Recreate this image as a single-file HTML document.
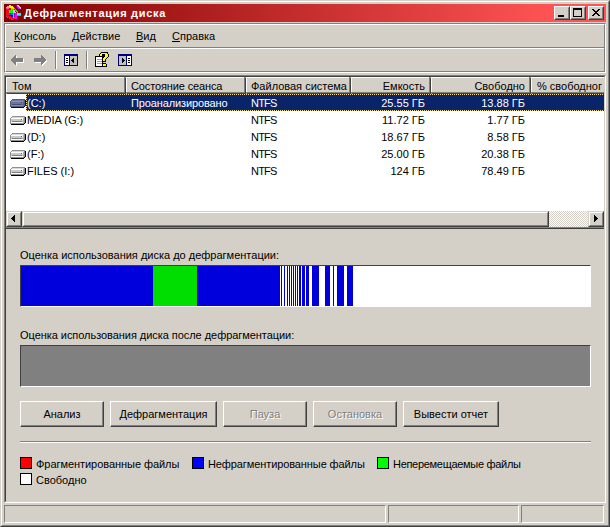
<!DOCTYPE html>
<html><head><meta charset="utf-8">
<style>
*{margin:0;padding:0;box-sizing:border-box}
html,body{width:610px;height:527px;overflow:hidden;background:#D4D0C8}
body{position:relative;font-family:"Liberation Sans",sans-serif;font-size:11px;color:#000}
.a{position:absolute;display:block}
.t{position:absolute;white-space:nowrap;line-height:13px}
u{text-decoration:underline}
</style></head><body>
<div class="a" style="left:0px;top:0px;width:610px;height:527px;border-top:1px solid #D4D0C8;border-left:1px solid #D4D0C8;border-right:1px solid #404040;border-bottom:1px solid #404040;"></div><div class="a" style="left:1px;top:1px;width:608px;height:525px;border-top:1px solid #FFFFFF;border-left:1px solid #FFFFFF;border-right:1px solid #808080;border-bottom:1px solid #808080"></div>
<div class="a" style="left:4px;top:4px;width:602px;height:18px;background:linear-gradient(to right,#800000 0px,#FF5454 550px,#FF5454 602px)"></div>
<svg class="a" style="left:5px;top:4px" width="18" height="16" shape-rendering="crispEdges"><rect x="4" y="1" width="2" height="1" fill="#FFFF00"/><rect x="11" y="1" width="1" height="1" fill="#9000D0"/><rect x="12" y="1" width="2" height="1" fill="#FFA8FF"/><rect x="2" y="2" width="2" height="1" fill="#FF8C8C"/><rect x="4" y="2" width="4" height="1" fill="#FFFF00"/><rect x="11" y="2" width="1" height="1" fill="#9000D0"/><rect x="12" y="2" width="1" height="1" fill="#FF00FF"/><rect x="13" y="2" width="2" height="1" fill="#FFA8FF"/><rect x="1" y="3" width="3" height="1" fill="#FF8C8C"/><rect x="4" y="3" width="4" height="1" fill="#FFFF00"/><rect x="8" y="3" width="1" height="1" fill="#FFD000"/><rect x="12" y="3" width="2" height="1" fill="#FF00FF"/><rect x="14" y="3" width="2" height="1" fill="#FFA8FF"/><rect x="1" y="4" width="3" height="1" fill="#FF5A6E"/><rect x="4" y="4" width="2" height="1" fill="#FF0020"/><rect x="6" y="4" width="3" height="1" fill="#FFD000"/><rect x="9" y="4" width="1" height="1" fill="#FF9000"/><rect x="13" y="4" width="2" height="1" fill="#FF00FF"/><rect x="15" y="4" width="1" height="1" fill="#FFA8FF"/><rect x="1" y="5" width="5" height="1" fill="#FF0020"/><rect x="6" y="5" width="3" height="1" fill="#FF9000"/><rect x="9" y="5" width="1" height="1" fill="#006000"/><rect x="10" y="5" width="1" height="1" fill="#00FF00"/><rect x="14" y="5" width="1" height="1" fill="#200020"/><rect x="1" y="6" width="3" height="1" fill="#FF0020"/><rect x="4" y="6" width="4" height="1" fill="#00FF00"/><rect x="8" y="6" width="2" height="1" fill="#FFA8FF"/><rect x="10" y="6" width="2" height="1" fill="#00FF00"/><rect x="1" y="7" width="3" height="1" fill="#FF0020"/><rect x="4" y="7" width="4" height="1" fill="#00FF00"/><rect x="8" y="7" width="2" height="1" fill="#FFA8FF"/><rect x="10" y="7" width="1" height="1" fill="#006000"/><rect x="11" y="7" width="2" height="1" fill="#00FF00"/><rect x="1" y="8" width="3" height="1" fill="#FF0020"/><rect x="4" y="8" width="4" height="1" fill="#00FF00"/><rect x="8" y="8" width="3" height="1" fill="#FFA8FF"/><rect x="12" y="8" width="1" height="1" fill="#00FF00"/><rect x="1" y="9" width="3" height="1" fill="#FF0020"/><rect x="4" y="9" width="4" height="1" fill="#0060FF"/><rect x="8" y="9" width="1" height="1" fill="#00C8E8"/><rect x="9" y="9" width="1" height="1" fill="#9000D0"/><rect x="10" y="9" width="2" height="1" fill="#FF00FF"/><rect x="12" y="9" width="4" height="1" fill="#00FFFF"/><rect x="16" y="9" width="1" height="1" fill="#0010F0"/><rect x="1" y="10" width="3" height="1" fill="#FF0020"/><rect x="4" y="10" width="4" height="1" fill="#0060FF"/><rect x="8" y="10" width="1" height="1" fill="#00FFFF"/><rect x="9" y="10" width="1" height="1" fill="#9000D0"/><rect x="10" y="10" width="2" height="1" fill="#FF00FF"/><rect x="12" y="10" width="4" height="1" fill="#00FFFF"/><rect x="1" y="11" width="3" height="1" fill="#FF0020"/><rect x="4" y="11" width="4" height="1" fill="#0010F0"/><rect x="8" y="11" width="1" height="1" fill="#00FFFF"/><rect x="9" y="11" width="1" height="1" fill="#9000D0"/><rect x="10" y="11" width="2" height="1" fill="#FF00FF"/><rect x="12" y="11" width="4" height="1" fill="#00C8E8"/><rect x="1" y="12" width="1" height="1" fill="#C04080"/><rect x="2" y="12" width="4" height="1" fill="#FF0020"/><rect x="6" y="12" width="2" height="1" fill="#0010F0"/><rect x="8" y="12" width="1" height="1" fill="#00FFFF"/><rect x="9" y="12" width="1" height="1" fill="#9000D0"/><rect x="10" y="12" width="2" height="1" fill="#FF00FF"/><rect x="2" y="13" width="1" height="1" fill="#C04080"/><rect x="3" y="13" width="5" height="1" fill="#FF0020"/><rect x="8" y="13" width="1" height="1" fill="#00FFFF"/><rect x="9" y="13" width="3" height="1" fill="#FF00FF"/><rect x="4" y="14" width="1" height="1" fill="#C04080"/><rect x="5" y="14" width="5" height="1" fill="#FF0020"/><rect x="10" y="14" width="2" height="1" fill="#FF00FF"/><rect x="6" y="15" width="1" height="1" fill="#C04080"/><rect x="7" y="15" width="2" height="1" fill="#FF0020"/><rect x="9" y="15" width="1" height="1" fill="#200020"/></svg>
<div class="t" style="left:24px;top:7px;color:#fff;font-weight:bold;font-size:11px;line-height:13px;letter-spacing:0.7px">Дефрагментация диска</div>
<div class="a" style="left:554px;top:6px;width:16px;height:14px;border-top:1px solid #FFFFFF;border-left:1px solid #FFFFFF;border-right:1px solid #404040;border-bottom:1px solid #404040;background:#D4D0C8"></div><div class="a" style="left:555px;top:7px;width:14px;height:12px;border-top:1px solid #D4D0C8;border-left:1px solid #D4D0C8;border-right:1px solid #808080;border-bottom:1px solid #808080"></div>
<div class="a" style="left:570px;top:6px;width:16px;height:14px;border-top:1px solid #FFFFFF;border-left:1px solid #FFFFFF;border-right:1px solid #404040;border-bottom:1px solid #404040;background:#D4D0C8"></div><div class="a" style="left:571px;top:7px;width:14px;height:12px;border-top:1px solid #D4D0C8;border-left:1px solid #D4D0C8;border-right:1px solid #808080;border-bottom:1px solid #808080"></div>
<div class="a" style="left:588px;top:6px;width:16px;height:14px;border-top:1px solid #FFFFFF;border-left:1px solid #FFFFFF;border-right:1px solid #404040;border-bottom:1px solid #404040;background:#D4D0C8"></div><div class="a" style="left:589px;top:7px;width:14px;height:12px;border-top:1px solid #D4D0C8;border-left:1px solid #D4D0C8;border-right:1px solid #808080;border-bottom:1px solid #808080"></div>
<div class="a" style="left:558px;top:15px;width:6px;height:2px;background:#000"></div>
<div class="a" style="left:573px;top:8px;width:9px;height:9px;border:1px solid #000;border-top:2px solid #000"></div>
<svg class="a" style="left:592px;top:9px" width="8" height="7" shape-rendering="crispEdges"><rect x="0" y="0" width="2" height="1" fill="#000"/><rect x="6" y="0" width="2" height="1" fill="#000"/><rect x="1" y="1" width="2" height="1" fill="#000"/><rect x="5" y="1" width="2" height="1" fill="#000"/><rect x="2" y="2" width="4" height="1" fill="#000"/><rect x="3" y="3" width="2" height="1" fill="#000"/><rect x="2" y="4" width="4" height="1" fill="#000"/><rect x="1" y="5" width="2" height="1" fill="#000"/><rect x="5" y="5" width="2" height="1" fill="#000"/><rect x="0" y="6" width="2" height="1" fill="#000"/><rect x="6" y="6" width="2" height="1" fill="#000"/></svg>
<div class="a" style="left:4px;top:23px;width:602px;height:50px;border-top:1px solid #808080;border-left:1px solid #808080;border-right:1px solid #FFFFFF;border-bottom:1px solid #FFFFFF"></div>
<div class="a" style="left:5px;top:24px;width:600px;height:48px;border-top:1px solid #FFFFFF;border-left:1px solid #FFFFFF;border-right:1px solid #808080;border-bottom:1px solid #808080"></div>
<div class="a" style="left:6px;top:47px;width:598px;height:1px;background:#808080"></div>
<div class="a" style="left:6px;top:48px;width:598px;height:1px;background:#FFFFFF"></div>
<div class="t" style="left:14px;top:30px;"><u>К</u>онсоль</div>
<div class="t" style="left:72px;top:30px;"><u>Д</u>ействие</div>
<div class="t" style="left:136px;top:30px;"><u>В</u>ид</div>
<div class="t" style="left:172px;top:30px;"><u>С</u>правка</div>
<svg class="a" style="left:11px;top:55px" width="13" height="11" shape-rendering="crispEdges"><rect x="4" y="0" width="1" height="1" fill="#808080"/><rect x="3" y="1" width="2" height="1" fill="#808080"/><rect x="5" y="1" width="1" height="1" fill="#FFFFFF"/><rect x="2" y="2" width="3" height="1" fill="#808080"/><rect x="5" y="2" width="1" height="1" fill="#FFFFFF"/><rect x="1" y="3" width="11" height="1" fill="#808080"/><rect x="0" y="4" width="12" height="1" fill="#808080"/><rect x="12" y="4" width="1" height="1" fill="#FFFFFF"/><rect x="0" y="5" width="12" height="1" fill="#808080"/><rect x="12" y="5" width="1" height="1" fill="#FFFFFF"/><rect x="1" y="6" width="11" height="1" fill="#808080"/><rect x="12" y="6" width="1" height="1" fill="#FFFFFF"/><rect x="2" y="7" width="3" height="1" fill="#808080"/><rect x="5" y="7" width="8" height="1" fill="#FFFFFF"/><rect x="3" y="8" width="2" height="1" fill="#808080"/><rect x="5" y="8" width="1" height="1" fill="#FFFFFF"/><rect x="4" y="9" width="1" height="1" fill="#808080"/><rect x="5" y="9" width="1" height="1" fill="#FFFFFF"/><rect x="5" y="10" width="1" height="1" fill="#FFFFFF"/></svg>
<svg class="a" style="left:34px;top:55px" width="13" height="11" shape-rendering="crispEdges"><rect x="7" y="0" width="1" height="1" fill="#808080"/><rect x="7" y="1" width="2" height="1" fill="#808080"/><rect x="7" y="2" width="3" height="1" fill="#808080"/><rect x="0" y="3" width="11" height="1" fill="#808080"/><rect x="0" y="4" width="12" height="1" fill="#808080"/><rect x="0" y="5" width="12" height="1" fill="#808080"/><rect x="12" y="5" width="1" height="1" fill="#FFFFFF"/><rect x="0" y="6" width="11" height="1" fill="#808080"/><rect x="11" y="6" width="2" height="1" fill="#FFFFFF"/><rect x="1" y="7" width="6" height="1" fill="#FFFFFF"/><rect x="7" y="7" width="3" height="1" fill="#808080"/><rect x="10" y="7" width="2" height="1" fill="#FFFFFF"/><rect x="7" y="8" width="2" height="1" fill="#808080"/><rect x="9" y="8" width="2" height="1" fill="#FFFFFF"/><rect x="7" y="9" width="1" height="1" fill="#808080"/><rect x="8" y="9" width="2" height="1" fill="#FFFFFF"/><rect x="8" y="10" width="1" height="1" fill="#FFFFFF"/></svg>
<div class="a" style="left:55px;top:51px;width:1px;height:18px;background:#808080"></div>
<div class="a" style="left:56px;top:51px;width:1px;height:18px;background:#FFFFFF"></div>
<svg class="a" style="left:64px;top:54px" width="14" height="12" shape-rendering="crispEdges"><rect x="0" y="0" width="14" height="1" fill="#000080"/><rect x="0" y="1" width="14" height="1" fill="#000080"/><rect x="0" y="2" width="1" height="1" fill="#000080"/><rect x="1" y="2" width="4" height="1" fill="#FFFFFF"/><rect x="5" y="2" width="1" height="1" fill="#000080"/><rect x="6" y="2" width="7" height="1" fill="#C0C0C0"/><rect x="13" y="2" width="1" height="1" fill="#000080"/><rect x="0" y="3" width="1" height="1" fill="#000080"/><rect x="1" y="3" width="4" height="1" fill="#FFFFFF"/><rect x="5" y="3" width="1" height="1" fill="#000080"/><rect x="6" y="3" width="7" height="1" fill="#C0C0C0"/><rect x="13" y="3" width="1" height="1" fill="#000080"/><rect x="0" y="4" width="1" height="1" fill="#000080"/><rect x="1" y="4" width="1" height="1" fill="#FFFFFF"/><rect x="2" y="4" width="2" height="1" fill="#000"/><rect x="4" y="4" width="1" height="1" fill="#FFFFFF"/><rect x="5" y="4" width="1" height="1" fill="#000080"/><rect x="6" y="4" width="3" height="1" fill="#C0C0C0"/><rect x="9" y="4" width="1" height="1" fill="#000"/><rect x="10" y="4" width="3" height="1" fill="#C0C0C0"/><rect x="13" y="4" width="1" height="1" fill="#000080"/><rect x="0" y="5" width="1" height="1" fill="#000080"/><rect x="1" y="5" width="4" height="1" fill="#FFFFFF"/><rect x="5" y="5" width="1" height="1" fill="#000080"/><rect x="6" y="5" width="2" height="1" fill="#C0C0C0"/><rect x="8" y="5" width="2" height="1" fill="#000"/><rect x="10" y="5" width="3" height="1" fill="#C0C0C0"/><rect x="13" y="5" width="1" height="1" fill="#000080"/><rect x="0" y="6" width="1" height="1" fill="#000080"/><rect x="1" y="6" width="1" height="1" fill="#FFFFFF"/><rect x="2" y="6" width="2" height="1" fill="#000"/><rect x="4" y="6" width="1" height="1" fill="#FFFFFF"/><rect x="5" y="6" width="1" height="1" fill="#000080"/><rect x="6" y="6" width="1" height="1" fill="#C0C0C0"/><rect x="7" y="6" width="3" height="1" fill="#000"/><rect x="10" y="6" width="3" height="1" fill="#C0C0C0"/><rect x="13" y="6" width="1" height="1" fill="#000080"/><rect x="0" y="7" width="1" height="1" fill="#000080"/><rect x="1" y="7" width="4" height="1" fill="#FFFFFF"/><rect x="5" y="7" width="1" height="1" fill="#000080"/><rect x="6" y="7" width="2" height="1" fill="#C0C0C0"/><rect x="8" y="7" width="2" height="1" fill="#000"/><rect x="10" y="7" width="3" height="1" fill="#C0C0C0"/><rect x="13" y="7" width="1" height="1" fill="#000080"/><rect x="0" y="8" width="1" height="1" fill="#000080"/><rect x="1" y="8" width="1" height="1" fill="#FFFFFF"/><rect x="2" y="8" width="2" height="1" fill="#000"/><rect x="4" y="8" width="1" height="1" fill="#FFFFFF"/><rect x="5" y="8" width="1" height="1" fill="#000080"/><rect x="6" y="8" width="3" height="1" fill="#C0C0C0"/><rect x="9" y="8" width="1" height="1" fill="#000"/><rect x="10" y="8" width="3" height="1" fill="#C0C0C0"/><rect x="13" y="8" width="1" height="1" fill="#000080"/><rect x="0" y="9" width="1" height="1" fill="#000080"/><rect x="1" y="9" width="4" height="1" fill="#FFFFFF"/><rect x="5" y="9" width="1" height="1" fill="#000080"/><rect x="6" y="9" width="7" height="1" fill="#C0C0C0"/><rect x="13" y="9" width="1" height="1" fill="#000080"/><rect x="0" y="10" width="1" height="1" fill="#000080"/><rect x="1" y="10" width="4" height="1" fill="#FFFFFF"/><rect x="5" y="10" width="1" height="1" fill="#000080"/><rect x="6" y="10" width="7" height="1" fill="#C0C0C0"/><rect x="13" y="10" width="1" height="1" fill="#000080"/><rect x="0" y="11" width="14" height="1" fill="#000080"/></svg>
<div class="a" style="left:86px;top:51px;width:1px;height:18px;background:#808080"></div>
<div class="a" style="left:87px;top:51px;width:1px;height:18px;background:#FFFFFF"></div>
<svg class="a" style="left:95px;top:52px" width="14" height="15" shape-rendering="crispEdges"><rect x="6" y="0" width="7" height="1" fill="#000"/><rect x="5" y="1" width="1" height="1" fill="#000"/><rect x="6" y="1" width="6" height="1" fill="#FFFF00"/><rect x="12" y="1" width="1" height="1" fill="#000"/><rect x="4" y="2" width="1" height="1" fill="#000"/><rect x="5" y="2" width="2" height="1" fill="#FFFF00"/><rect x="7" y="2" width="3" height="1" fill="#000"/><rect x="10" y="2" width="3" height="1" fill="#FFFF00"/><rect x="13" y="2" width="1" height="1" fill="#000"/><rect x="4" y="3" width="1" height="1" fill="#000"/><rect x="5" y="3" width="2" height="1" fill="#FFFF00"/><rect x="7" y="3" width="3" height="1" fill="#000"/><rect x="10" y="3" width="3" height="1" fill="#FFFF00"/><rect x="13" y="3" width="1" height="1" fill="#000"/><rect x="0" y="4" width="10" height="1" fill="#000"/><rect x="10" y="4" width="3" height="1" fill="#FFFF00"/><rect x="13" y="4" width="1" height="1" fill="#000"/><rect x="0" y="5" width="1" height="1" fill="#000"/><rect x="1" y="5" width="6" height="1" fill="#FFFFFF"/><rect x="7" y="5" width="2" height="1" fill="#000"/><rect x="9" y="5" width="3" height="1" fill="#FFFF00"/><rect x="12" y="5" width="1" height="1" fill="#000"/><rect x="0" y="6" width="1" height="1" fill="#000"/><rect x="1" y="6" width="6" height="1" fill="#FFFFFF"/><rect x="7" y="6" width="1" height="1" fill="#000"/><rect x="8" y="6" width="3" height="1" fill="#FFFF00"/><rect x="11" y="6" width="1" height="1" fill="#000"/><rect x="0" y="7" width="1" height="1" fill="#000"/><rect x="1" y="7" width="1" height="1" fill="#FFFFFF"/><rect x="2" y="7" width="5" height="1" fill="#A0A0A0"/><rect x="7" y="7" width="1" height="1" fill="#000"/><rect x="8" y="7" width="2" height="1" fill="#FFFF00"/><rect x="10" y="7" width="1" height="1" fill="#000"/><rect x="0" y="8" width="1" height="1" fill="#000"/><rect x="1" y="8" width="6" height="1" fill="#FFFFFF"/><rect x="7" y="8" width="1" height="1" fill="#000"/><rect x="8" y="8" width="2" height="1" fill="#FFFF00"/><rect x="10" y="8" width="1" height="1" fill="#000"/><rect x="0" y="9" width="1" height="1" fill="#000"/><rect x="1" y="9" width="1" height="1" fill="#FFFFFF"/><rect x="2" y="9" width="5" height="1" fill="#A0A0A0"/><rect x="7" y="9" width="4" height="1" fill="#000"/><rect x="0" y="10" width="1" height="1" fill="#000"/><rect x="1" y="10" width="6" height="1" fill="#FFFFFF"/><rect x="7" y="10" width="1" height="1" fill="#000"/><rect x="0" y="11" width="1" height="1" fill="#000"/><rect x="1" y="11" width="1" height="1" fill="#FFFFFF"/><rect x="2" y="11" width="5" height="1" fill="#A0A0A0"/><rect x="7" y="11" width="4" height="1" fill="#000"/><rect x="0" y="12" width="1" height="1" fill="#000"/><rect x="1" y="12" width="6" height="1" fill="#FFFFFF"/><rect x="7" y="12" width="1" height="1" fill="#000"/><rect x="8" y="12" width="3" height="1" fill="#FFFF00"/><rect x="11" y="12" width="1" height="1" fill="#000"/><rect x="0" y="13" width="1" height="1" fill="#000"/><rect x="1" y="13" width="6" height="1" fill="#FFFFFF"/><rect x="7" y="13" width="1" height="1" fill="#000"/><rect x="8" y="13" width="3" height="1" fill="#FFFF00"/><rect x="11" y="13" width="1" height="1" fill="#000"/><rect x="0" y="14" width="12" height="1" fill="#000"/></svg>
<svg class="a" style="left:118px;top:54px" width="14" height="12" shape-rendering="crispEdges"><rect x="0" y="0" width="14" height="1" fill="#000080"/><rect x="0" y="1" width="14" height="1" fill="#000080"/><rect x="0" y="2" width="1" height="1" fill="#000080"/><rect x="1" y="2" width="7" height="1" fill="#C0C0C0"/><rect x="8" y="2" width="1" height="1" fill="#000080"/><rect x="9" y="2" width="4" height="1" fill="#FFFFFF"/><rect x="13" y="2" width="1" height="1" fill="#000080"/><rect x="0" y="3" width="1" height="1" fill="#000080"/><rect x="1" y="3" width="7" height="1" fill="#C0C0C0"/><rect x="8" y="3" width="1" height="1" fill="#000080"/><rect x="9" y="3" width="4" height="1" fill="#FFFFFF"/><rect x="13" y="3" width="1" height="1" fill="#000080"/><rect x="0" y="4" width="1" height="1" fill="#000080"/><rect x="1" y="4" width="3" height="1" fill="#C0C0C0"/><rect x="4" y="4" width="1" height="1" fill="#000"/><rect x="5" y="4" width="3" height="1" fill="#C0C0C0"/><rect x="8" y="4" width="1" height="1" fill="#000080"/><rect x="9" y="4" width="1" height="1" fill="#FFFFFF"/><rect x="10" y="4" width="2" height="1" fill="#000"/><rect x="12" y="4" width="1" height="1" fill="#FFFFFF"/><rect x="13" y="4" width="1" height="1" fill="#000080"/><rect x="0" y="5" width="1" height="1" fill="#000080"/><rect x="1" y="5" width="3" height="1" fill="#C0C0C0"/><rect x="4" y="5" width="2" height="1" fill="#000"/><rect x="6" y="5" width="2" height="1" fill="#C0C0C0"/><rect x="8" y="5" width="1" height="1" fill="#000080"/><rect x="9" y="5" width="4" height="1" fill="#FFFFFF"/><rect x="13" y="5" width="1" height="1" fill="#000080"/><rect x="0" y="6" width="1" height="1" fill="#000080"/><rect x="1" y="6" width="3" height="1" fill="#C0C0C0"/><rect x="4" y="6" width="3" height="1" fill="#000"/><rect x="7" y="6" width="1" height="1" fill="#C0C0C0"/><rect x="8" y="6" width="1" height="1" fill="#000080"/><rect x="9" y="6" width="1" height="1" fill="#FFFFFF"/><rect x="10" y="6" width="2" height="1" fill="#000"/><rect x="12" y="6" width="1" height="1" fill="#FFFFFF"/><rect x="13" y="6" width="1" height="1" fill="#000080"/><rect x="0" y="7" width="1" height="1" fill="#000080"/><rect x="1" y="7" width="3" height="1" fill="#C0C0C0"/><rect x="4" y="7" width="2" height="1" fill="#000"/><rect x="6" y="7" width="2" height="1" fill="#C0C0C0"/><rect x="8" y="7" width="1" height="1" fill="#000080"/><rect x="9" y="7" width="4" height="1" fill="#FFFFFF"/><rect x="13" y="7" width="1" height="1" fill="#000080"/><rect x="0" y="8" width="1" height="1" fill="#000080"/><rect x="1" y="8" width="3" height="1" fill="#C0C0C0"/><rect x="4" y="8" width="1" height="1" fill="#000"/><rect x="5" y="8" width="3" height="1" fill="#C0C0C0"/><rect x="8" y="8" width="1" height="1" fill="#000080"/><rect x="9" y="8" width="1" height="1" fill="#FFFFFF"/><rect x="10" y="8" width="2" height="1" fill="#000"/><rect x="12" y="8" width="1" height="1" fill="#FFFFFF"/><rect x="13" y="8" width="1" height="1" fill="#000080"/><rect x="0" y="9" width="1" height="1" fill="#000080"/><rect x="1" y="9" width="7" height="1" fill="#C0C0C0"/><rect x="8" y="9" width="1" height="1" fill="#000080"/><rect x="9" y="9" width="4" height="1" fill="#FFFFFF"/><rect x="13" y="9" width="1" height="1" fill="#000080"/><rect x="0" y="10" width="1" height="1" fill="#000080"/><rect x="1" y="10" width="7" height="1" fill="#C0C0C0"/><rect x="8" y="10" width="1" height="1" fill="#000080"/><rect x="9" y="10" width="4" height="1" fill="#FFFFFF"/><rect x="13" y="10" width="1" height="1" fill="#000080"/><rect x="0" y="11" width="14" height="1" fill="#000080"/></svg>
<div class="a" style="left:4px;top:75px;width:602px;height:428px;border-top:1px solid #808080;border-left:1px solid #808080;border-right:1px solid #FFFFFF;border-bottom:1px solid #FFFFFF"></div>
<div class="a" style="left:5px;top:76px;width:600px;height:426px;border-top:1px solid #404040;border-left:1px solid #404040;border-right:1px solid #D4D0C8;border-bottom:1px solid #D4D0C8"></div>
<div class="a" style="left:6px;top:77px;width:598px;height:134px;background:#fff"></div>
<div class="a" style="left:6px;top:77px;width:598px;height:17px;overflow:hidden">
<div class="a" style="left:0px;top:0px;width:120px;height:17px;border-top:1px solid #FFFFFF;border-left:1px solid #FFFFFF;border-right:1px solid #404040;border-bottom:1px solid #404040;background:#D4D0C8"></div>
<div class="a" style="left:0px;top:0px;width:119px;height:16px;border-right:1px solid #808080;border-bottom:1px solid #808080"></div>
<div class="t" style="left:6px;top:3px;">Том</div>
<div class="a" style="left:120px;top:0px;width:120px;height:17px;border-top:1px solid #FFFFFF;border-left:1px solid #FFFFFF;border-right:1px solid #404040;border-bottom:1px solid #404040;background:#D4D0C8"></div>
<div class="a" style="left:120px;top:0px;width:119px;height:16px;border-right:1px solid #808080;border-bottom:1px solid #808080"></div>
<div class="t" style="left:125px;top:3px;letter-spacing:-0.13px">Состояние сеанса</div>
<div class="a" style="left:240px;top:0px;width:105px;height:17px;border-top:1px solid #FFFFFF;border-left:1px solid #FFFFFF;border-right:1px solid #404040;border-bottom:1px solid #404040;background:#D4D0C8"></div>
<div class="a" style="left:240px;top:0px;width:104px;height:16px;border-right:1px solid #808080;border-bottom:1px solid #808080"></div>
<div class="t" style="left:245px;top:3px;">Файловая система</div>
<div class="a" style="left:345px;top:0px;width:80px;height:17px;border-top:1px solid #FFFFFF;border-left:1px solid #FFFFFF;border-right:1px solid #404040;border-bottom:1px solid #404040;background:#D4D0C8"></div>
<div class="a" style="left:345px;top:0px;width:79px;height:16px;border-right:1px solid #808080;border-bottom:1px solid #808080"></div>
<div class="t" style="left:345px;width:74px;top:3px;text-align:right">Емкость</div>
<div class="a" style="left:425px;top:0px;width:100px;height:17px;border-top:1px solid #FFFFFF;border-left:1px solid #FFFFFF;border-right:1px solid #404040;border-bottom:1px solid #404040;background:#D4D0C8"></div>
<div class="a" style="left:425px;top:0px;width:99px;height:16px;border-right:1px solid #808080;border-bottom:1px solid #808080"></div>
<div class="t" style="left:425px;width:94px;top:3px;text-align:right">Свободно</div>
<div class="a" style="left:525px;top:0px;width:120px;height:17px;border-top:1px solid #FFFFFF;border-left:1px solid #FFFFFF;border-right:1px solid #404040;border-bottom:1px solid #404040;background:#D4D0C8"></div>
<div class="a" style="left:525px;top:0px;width:119px;height:16px;border-right:1px solid #808080;border-bottom:1px solid #808080"></div>
<div class="t" style="left:531px;top:3px;">% свободног</div>
</div>
<div class="a" style="left:26px;top:94px;width:578px;height:17px;background:#0A246A"></div>
<div class="a" style="left:26px;top:94px;width:578px;height:1px;background:repeating-linear-gradient(to right,#F5DB95 0 1px,transparent 1px 2px)"></div>
<div class="a" style="left:26px;top:110px;width:578px;height:1px;background:repeating-linear-gradient(to right,#F5DB95 0 1px,transparent 1px 2px)"></div>
<div class="a" style="left:26px;top:94px;width:1px;height:17px;background:repeating-linear-gradient(to bottom,#F5DB95 0 1px,transparent 1px 2px)"></div>
<svg class="a" style="left:10px;top:99px" width="16" height="9" shape-rendering="crispEdges"><rect x="2" y="0" width="13" height="1" fill="#4D5A7D"/><rect x="1" y="1" width="1" height="1" fill="#4D5A7D"/><rect x="2" y="1" width="12" height="1" fill="#717EA1"/><rect x="14" y="1" width="1" height="1" fill="#4D5A7D"/><rect x="15" y="1" width="1" height="1" fill="#051235"/><rect x="0" y="2" width="1" height="1" fill="#4D5A7D"/><rect x="1" y="2" width="12" height="1" fill="#8491B4"/><rect x="13" y="2" width="1" height="1" fill="#5D6A8D"/><rect x="14" y="2" width="1" height="1" fill="#4D5A7D"/><rect x="15" y="2" width="1" height="1" fill="#051235"/><rect x="0" y="3" width="1" height="1" fill="#4D5A7D"/><rect x="1" y="3" width="10" height="1" fill="#697699"/><rect x="11" y="3" width="1" height="1" fill="#056235"/><rect x="12" y="3" width="1" height="1" fill="#8491B4"/><rect x="13" y="3" width="1" height="1" fill="#5D6A8D"/><rect x="14" y="3" width="1" height="1" fill="#4D5A7D"/><rect x="15" y="3" width="1" height="1" fill="#051235"/><rect x="0" y="4" width="1" height="1" fill="#4D5A7D"/><rect x="1" y="4" width="12" height="1" fill="#697699"/><rect x="13" y="4" width="1" height="1" fill="#5D6A8D"/><rect x="14" y="4" width="1" height="1" fill="#4D5A7D"/><rect x="15" y="4" width="1" height="1" fill="#051235"/><rect x="0" y="5" width="1" height="1" fill="#4D5A7D"/><rect x="1" y="5" width="1" height="1" fill="#697699"/><rect x="2" y="5" width="10" height="1" fill="#455275"/><rect x="12" y="5" width="1" height="1" fill="#697699"/><rect x="13" y="5" width="1" height="1" fill="#5D6A8D"/><rect x="14" y="5" width="1" height="1" fill="#4D5A7D"/><rect x="15" y="5" width="1" height="1" fill="#051235"/><rect x="0" y="6" width="1" height="1" fill="#4D5A7D"/><rect x="1" y="6" width="12" height="1" fill="#8491B4"/><rect x="13" y="6" width="1" height="1" fill="#5D6A8D"/><rect x="14" y="6" width="1" height="1" fill="#4D5A7D"/><rect x="15" y="6" width="1" height="1" fill="#051235"/><rect x="0" y="7" width="14" height="1" fill="#4D5A7D"/><rect x="14" y="7" width="1" height="1" fill="#051235"/><rect x="1" y="8" width="13" height="1" fill="#051235"/></svg>
<div class="t" style="left:27px;top:97px;color:#fff">(C:)</div>
<div class="t" style="left:131px;top:97px;color:#fff;letter-spacing:-0.13px">Проанализировано</div>
<div class="t" style="left:251px;top:97px;color:#fff;letter-spacing:-0.8px">NTFS</div>
<div class="t" style="left:351px;width:74px;top:97px;text-align:right;color:#fff">25.55 ГБ</div>
<div class="t" style="left:431px;width:94px;top:97px;text-align:right;color:#fff">13.88 ГБ</div>
<svg class="a" style="left:10px;top:116px" width="16" height="9" shape-rendering="crispEdges"><rect x="2" y="0" width="13" height="1" fill="#909090"/><rect x="1" y="1" width="1" height="1" fill="#909090"/><rect x="2" y="1" width="12" height="1" fill="#D8D8D8"/><rect x="14" y="1" width="1" height="1" fill="#909090"/><rect x="15" y="1" width="1" height="1" fill="#000000"/><rect x="0" y="2" width="1" height="1" fill="#909090"/><rect x="1" y="2" width="12" height="1" fill="#FFFFFF"/><rect x="13" y="2" width="1" height="1" fill="#B0B0B0"/><rect x="14" y="2" width="1" height="1" fill="#909090"/><rect x="15" y="2" width="1" height="1" fill="#000000"/><rect x="0" y="3" width="1" height="1" fill="#909090"/><rect x="1" y="3" width="10" height="1" fill="#C8C8C8"/><rect x="11" y="3" width="1" height="1" fill="#00A000"/><rect x="12" y="3" width="1" height="1" fill="#FFFFFF"/><rect x="13" y="3" width="1" height="1" fill="#B0B0B0"/><rect x="14" y="3" width="1" height="1" fill="#909090"/><rect x="15" y="3" width="1" height="1" fill="#000000"/><rect x="0" y="4" width="1" height="1" fill="#909090"/><rect x="1" y="4" width="12" height="1" fill="#C8C8C8"/><rect x="13" y="4" width="1" height="1" fill="#B0B0B0"/><rect x="14" y="4" width="1" height="1" fill="#909090"/><rect x="15" y="4" width="1" height="1" fill="#000000"/><rect x="0" y="5" width="1" height="1" fill="#909090"/><rect x="1" y="5" width="1" height="1" fill="#C8C8C8"/><rect x="2" y="5" width="10" height="1" fill="#808080"/><rect x="12" y="5" width="1" height="1" fill="#C8C8C8"/><rect x="13" y="5" width="1" height="1" fill="#B0B0B0"/><rect x="14" y="5" width="1" height="1" fill="#909090"/><rect x="15" y="5" width="1" height="1" fill="#000000"/><rect x="0" y="6" width="1" height="1" fill="#909090"/><rect x="1" y="6" width="12" height="1" fill="#FFFFFF"/><rect x="13" y="6" width="1" height="1" fill="#B0B0B0"/><rect x="14" y="6" width="1" height="1" fill="#909090"/><rect x="15" y="6" width="1" height="1" fill="#000000"/><rect x="0" y="7" width="14" height="1" fill="#909090"/><rect x="14" y="7" width="1" height="1" fill="#000000"/><rect x="1" y="8" width="13" height="1" fill="#000000"/></svg>
<div class="t" style="left:27px;top:114px;color:#000">MEDIA (G:)</div>
<div class="t" style="left:131px;top:114px;color:#000;letter-spacing:-0.13px"></div>
<div class="t" style="left:251px;top:114px;color:#000;letter-spacing:-0.8px">NTFS</div>
<div class="t" style="left:351px;width:74px;top:114px;text-align:right;color:#000">11.72 ГБ</div>
<div class="t" style="left:431px;width:94px;top:114px;text-align:right;color:#000">1.77 ГБ</div>
<svg class="a" style="left:10px;top:133px" width="16" height="9" shape-rendering="crispEdges"><rect x="2" y="0" width="13" height="1" fill="#909090"/><rect x="1" y="1" width="1" height="1" fill="#909090"/><rect x="2" y="1" width="12" height="1" fill="#D8D8D8"/><rect x="14" y="1" width="1" height="1" fill="#909090"/><rect x="15" y="1" width="1" height="1" fill="#000000"/><rect x="0" y="2" width="1" height="1" fill="#909090"/><rect x="1" y="2" width="12" height="1" fill="#FFFFFF"/><rect x="13" y="2" width="1" height="1" fill="#B0B0B0"/><rect x="14" y="2" width="1" height="1" fill="#909090"/><rect x="15" y="2" width="1" height="1" fill="#000000"/><rect x="0" y="3" width="1" height="1" fill="#909090"/><rect x="1" y="3" width="10" height="1" fill="#C8C8C8"/><rect x="11" y="3" width="1" height="1" fill="#00A000"/><rect x="12" y="3" width="1" height="1" fill="#FFFFFF"/><rect x="13" y="3" width="1" height="1" fill="#B0B0B0"/><rect x="14" y="3" width="1" height="1" fill="#909090"/><rect x="15" y="3" width="1" height="1" fill="#000000"/><rect x="0" y="4" width="1" height="1" fill="#909090"/><rect x="1" y="4" width="12" height="1" fill="#C8C8C8"/><rect x="13" y="4" width="1" height="1" fill="#B0B0B0"/><rect x="14" y="4" width="1" height="1" fill="#909090"/><rect x="15" y="4" width="1" height="1" fill="#000000"/><rect x="0" y="5" width="1" height="1" fill="#909090"/><rect x="1" y="5" width="1" height="1" fill="#C8C8C8"/><rect x="2" y="5" width="10" height="1" fill="#808080"/><rect x="12" y="5" width="1" height="1" fill="#C8C8C8"/><rect x="13" y="5" width="1" height="1" fill="#B0B0B0"/><rect x="14" y="5" width="1" height="1" fill="#909090"/><rect x="15" y="5" width="1" height="1" fill="#000000"/><rect x="0" y="6" width="1" height="1" fill="#909090"/><rect x="1" y="6" width="12" height="1" fill="#FFFFFF"/><rect x="13" y="6" width="1" height="1" fill="#B0B0B0"/><rect x="14" y="6" width="1" height="1" fill="#909090"/><rect x="15" y="6" width="1" height="1" fill="#000000"/><rect x="0" y="7" width="14" height="1" fill="#909090"/><rect x="14" y="7" width="1" height="1" fill="#000000"/><rect x="1" y="8" width="13" height="1" fill="#000000"/></svg>
<div class="t" style="left:27px;top:131px;color:#000">(D:)</div>
<div class="t" style="left:131px;top:131px;color:#000;letter-spacing:-0.13px"></div>
<div class="t" style="left:251px;top:131px;color:#000;letter-spacing:-0.8px">NTFS</div>
<div class="t" style="left:351px;width:74px;top:131px;text-align:right;color:#000">18.67 ГБ</div>
<div class="t" style="left:431px;width:94px;top:131px;text-align:right;color:#000">8.58 ГБ</div>
<svg class="a" style="left:10px;top:150px" width="16" height="9" shape-rendering="crispEdges"><rect x="2" y="0" width="13" height="1" fill="#909090"/><rect x="1" y="1" width="1" height="1" fill="#909090"/><rect x="2" y="1" width="12" height="1" fill="#D8D8D8"/><rect x="14" y="1" width="1" height="1" fill="#909090"/><rect x="15" y="1" width="1" height="1" fill="#000000"/><rect x="0" y="2" width="1" height="1" fill="#909090"/><rect x="1" y="2" width="12" height="1" fill="#FFFFFF"/><rect x="13" y="2" width="1" height="1" fill="#B0B0B0"/><rect x="14" y="2" width="1" height="1" fill="#909090"/><rect x="15" y="2" width="1" height="1" fill="#000000"/><rect x="0" y="3" width="1" height="1" fill="#909090"/><rect x="1" y="3" width="10" height="1" fill="#C8C8C8"/><rect x="11" y="3" width="1" height="1" fill="#00A000"/><rect x="12" y="3" width="1" height="1" fill="#FFFFFF"/><rect x="13" y="3" width="1" height="1" fill="#B0B0B0"/><rect x="14" y="3" width="1" height="1" fill="#909090"/><rect x="15" y="3" width="1" height="1" fill="#000000"/><rect x="0" y="4" width="1" height="1" fill="#909090"/><rect x="1" y="4" width="12" height="1" fill="#C8C8C8"/><rect x="13" y="4" width="1" height="1" fill="#B0B0B0"/><rect x="14" y="4" width="1" height="1" fill="#909090"/><rect x="15" y="4" width="1" height="1" fill="#000000"/><rect x="0" y="5" width="1" height="1" fill="#909090"/><rect x="1" y="5" width="1" height="1" fill="#C8C8C8"/><rect x="2" y="5" width="10" height="1" fill="#808080"/><rect x="12" y="5" width="1" height="1" fill="#C8C8C8"/><rect x="13" y="5" width="1" height="1" fill="#B0B0B0"/><rect x="14" y="5" width="1" height="1" fill="#909090"/><rect x="15" y="5" width="1" height="1" fill="#000000"/><rect x="0" y="6" width="1" height="1" fill="#909090"/><rect x="1" y="6" width="12" height="1" fill="#FFFFFF"/><rect x="13" y="6" width="1" height="1" fill="#B0B0B0"/><rect x="14" y="6" width="1" height="1" fill="#909090"/><rect x="15" y="6" width="1" height="1" fill="#000000"/><rect x="0" y="7" width="14" height="1" fill="#909090"/><rect x="14" y="7" width="1" height="1" fill="#000000"/><rect x="1" y="8" width="13" height="1" fill="#000000"/></svg>
<div class="t" style="left:27px;top:148px;color:#000">(F:)</div>
<div class="t" style="left:131px;top:148px;color:#000;letter-spacing:-0.13px"></div>
<div class="t" style="left:251px;top:148px;color:#000;letter-spacing:-0.8px">NTFS</div>
<div class="t" style="left:351px;width:74px;top:148px;text-align:right;color:#000">25.00 ГБ</div>
<div class="t" style="left:431px;width:94px;top:148px;text-align:right;color:#000">20.38 ГБ</div>
<svg class="a" style="left:10px;top:167px" width="16" height="9" shape-rendering="crispEdges"><rect x="2" y="0" width="13" height="1" fill="#909090"/><rect x="1" y="1" width="1" height="1" fill="#909090"/><rect x="2" y="1" width="12" height="1" fill="#D8D8D8"/><rect x="14" y="1" width="1" height="1" fill="#909090"/><rect x="15" y="1" width="1" height="1" fill="#000000"/><rect x="0" y="2" width="1" height="1" fill="#909090"/><rect x="1" y="2" width="12" height="1" fill="#FFFFFF"/><rect x="13" y="2" width="1" height="1" fill="#B0B0B0"/><rect x="14" y="2" width="1" height="1" fill="#909090"/><rect x="15" y="2" width="1" height="1" fill="#000000"/><rect x="0" y="3" width="1" height="1" fill="#909090"/><rect x="1" y="3" width="10" height="1" fill="#C8C8C8"/><rect x="11" y="3" width="1" height="1" fill="#00A000"/><rect x="12" y="3" width="1" height="1" fill="#FFFFFF"/><rect x="13" y="3" width="1" height="1" fill="#B0B0B0"/><rect x="14" y="3" width="1" height="1" fill="#909090"/><rect x="15" y="3" width="1" height="1" fill="#000000"/><rect x="0" y="4" width="1" height="1" fill="#909090"/><rect x="1" y="4" width="12" height="1" fill="#C8C8C8"/><rect x="13" y="4" width="1" height="1" fill="#B0B0B0"/><rect x="14" y="4" width="1" height="1" fill="#909090"/><rect x="15" y="4" width="1" height="1" fill="#000000"/><rect x="0" y="5" width="1" height="1" fill="#909090"/><rect x="1" y="5" width="1" height="1" fill="#C8C8C8"/><rect x="2" y="5" width="10" height="1" fill="#808080"/><rect x="12" y="5" width="1" height="1" fill="#C8C8C8"/><rect x="13" y="5" width="1" height="1" fill="#B0B0B0"/><rect x="14" y="5" width="1" height="1" fill="#909090"/><rect x="15" y="5" width="1" height="1" fill="#000000"/><rect x="0" y="6" width="1" height="1" fill="#909090"/><rect x="1" y="6" width="12" height="1" fill="#FFFFFF"/><rect x="13" y="6" width="1" height="1" fill="#B0B0B0"/><rect x="14" y="6" width="1" height="1" fill="#909090"/><rect x="15" y="6" width="1" height="1" fill="#000000"/><rect x="0" y="7" width="14" height="1" fill="#909090"/><rect x="14" y="7" width="1" height="1" fill="#000000"/><rect x="1" y="8" width="13" height="1" fill="#000000"/></svg>
<div class="t" style="left:27px;top:165px;color:#000">FILES (I:)</div>
<div class="t" style="left:131px;top:165px;color:#000;letter-spacing:-0.13px"></div>
<div class="t" style="left:251px;top:165px;color:#000;letter-spacing:-0.8px">NTFS</div>
<div class="t" style="left:351px;width:74px;top:165px;text-align:right;color:#000">124 ГБ</div>
<div class="t" style="left:431px;width:94px;top:165px;text-align:right;color:#000">78.49 ГБ</div>
<div class="a" style="left:6px;top:211px;width:598px;height:16px;background-color:#fff;background-image:repeating-conic-gradient(#D4D0C8 0 25%,#fff 0 50%);background-size:2px 2px"></div>
<div class="a" style="left:6px;top:211px;width:16px;height:16px;border-top:1px solid #D4D0C8;border-left:1px solid #D4D0C8;border-right:1px solid #404040;border-bottom:1px solid #404040;background:#D4D0C8"></div><div class="a" style="left:7px;top:212px;width:14px;height:14px;border-top:1px solid #FFFFFF;border-left:1px solid #FFFFFF;border-right:1px solid #808080;border-bottom:1px solid #808080"></div>
<svg class="a" style="left:11px;top:215px" width="4" height="7" shape-rendering="crispEdges"><rect x="3" y="0" width="1" height="1" fill="#000"/><rect x="2" y="1" width="2" height="1" fill="#000"/><rect x="1" y="2" width="3" height="1" fill="#000"/><rect x="0" y="3" width="4" height="1" fill="#000"/><rect x="1" y="4" width="3" height="1" fill="#000"/><rect x="2" y="5" width="2" height="1" fill="#000"/><rect x="3" y="6" width="1" height="1" fill="#000"/></svg>
<div class="a" style="left:22px;top:211px;width:527px;height:16px;border-top:1px solid #D4D0C8;border-left:1px solid #D4D0C8;border-right:1px solid #404040;border-bottom:1px solid #404040;background:#D4D0C8"></div><div class="a" style="left:23px;top:212px;width:525px;height:14px;border-top:1px solid #FFFFFF;border-left:1px solid #FFFFFF;border-right:1px solid #808080;border-bottom:1px solid #808080"></div>
<div class="a" style="left:588px;top:211px;width:16px;height:16px;border-top:1px solid #D4D0C8;border-left:1px solid #D4D0C8;border-right:1px solid #404040;border-bottom:1px solid #404040;background:#D4D0C8"></div><div class="a" style="left:589px;top:212px;width:14px;height:14px;border-top:1px solid #FFFFFF;border-left:1px solid #FFFFFF;border-right:1px solid #808080;border-bottom:1px solid #808080"></div>
<svg class="a" style="left:594px;top:215px" width="4" height="7" shape-rendering="crispEdges"><rect x="0" y="0" width="1" height="1" fill="#000"/><rect x="0" y="1" width="2" height="1" fill="#000"/><rect x="0" y="2" width="3" height="1" fill="#000"/><rect x="0" y="3" width="4" height="1" fill="#000"/><rect x="0" y="4" width="3" height="1" fill="#000"/><rect x="0" y="5" width="2" height="1" fill="#000"/><rect x="0" y="6" width="1" height="1" fill="#000"/></svg>
<div class="a" style="left:6px;top:227px;width:598px;height:1px;background:#808080"></div>
<div class="a" style="left:6px;top:228px;width:598px;height:1px;background:#404040"></div>
<div class="t" style="left:20px;top:249px;">Оценка использования диска до дефрагментации:</div>
<div class="a" style="left:20px;top:265px;width:571px;height:42px;border-top:1px solid #404040;border-left:1px solid #404040;border-right:1px solid #fff;border-bottom:1px solid #fff;background:#fff"></div>
<div class="a" style="left:21px;top:266px;width:132px;height:40px;background:#0000DD"></div>
<div class="a" style="left:153px;top:266px;width:44px;height:40px;background:#00DD00"></div>
<div class="a" style="left:197px;top:266px;width:83px;height:40px;background:#0000DD"></div>
<div class="a" style="left:281px;top:266px;width:1px;height:40px;background:#0000DD"></div>
<div class="a" style="left:284px;top:266px;width:1px;height:40px;background:#0000DD"></div>
<div class="a" style="left:287px;top:266px;width:1px;height:40px;background:#0000DD"></div>
<div class="a" style="left:289px;top:266px;width:1px;height:40px;background:#0000DD"></div>
<div class="a" style="left:291px;top:266px;width:1px;height:40px;background:#0000DD"></div>
<div class="a" style="left:293px;top:266px;width:1px;height:40px;background:#0000DD"></div>
<div class="a" style="left:295px;top:266px;width:1px;height:40px;background:#0000DD"></div>
<div class="a" style="left:297px;top:266px;width:1px;height:40px;background:#0000DD"></div>
<div class="a" style="left:299px;top:266px;width:1px;height:40px;background:#0000DD"></div>
<div class="a" style="left:300px;top:266px;width:1px;height:40px;background:#0000DD"></div>
<div class="a" style="left:302px;top:266px;width:1px;height:40px;background:#0000DD"></div>
<div class="a" style="left:303px;top:266px;width:1px;height:40px;background:#0000DD"></div>
<div class="a" style="left:304px;top:266px;width:1px;height:40px;background:#0000DD"></div>
<div class="a" style="left:306px;top:266px;width:1px;height:40px;background:#0000DD"></div>
<div class="a" style="left:307px;top:266px;width:1px;height:40px;background:#0000DD"></div>
<div class="a" style="left:308px;top:266px;width:1px;height:40px;background:#0000DD"></div>
<div class="a" style="left:312px;top:266px;width:7px;height:40px;background:#0000DD"></div>
<div class="a" style="left:325px;top:266px;width:5px;height:40px;background:#0000DD"></div>
<div class="a" style="left:333px;top:266px;width:1px;height:40px;background:#0000DD"></div>
<div class="a" style="left:337px;top:266px;width:7px;height:40px;background:#0000DD"></div>
<div class="a" style="left:347px;top:266px;width:6px;height:40px;background:#0000DD"></div>
<div class="t" style="left:20px;top:329px;letter-spacing:-0.05px">Оценка использования диска после дефрагментации:</div>
<div class="a" style="left:20px;top:345px;width:571px;height:42px;border-top:1px solid #404040;border-left:1px solid #404040;border-right:1px solid #fff;border-bottom:1px solid #fff;background:#808080"></div>
<div class="a" style="left:20px;top:401px;width:84px;height:26px;border-top:1px solid #FFFFFF;border-left:1px solid #FFFFFF;border-right:1px solid #404040;border-bottom:1px solid #404040;background:#D4D0C8"></div>
<div class="a" style="left:21px;top:402px;width:82px;height:24px;border-right:1px solid #808080;border-bottom:1px solid #808080"></div>
<div class="t" style="left:20px;width:84px;top:408px;text-align:center">Анализ</div>
<div class="a" style="left:110px;top:401px;width:107px;height:26px;border-top:1px solid #FFFFFF;border-left:1px solid #FFFFFF;border-right:1px solid #404040;border-bottom:1px solid #404040;background:#D4D0C8"></div>
<div class="a" style="left:111px;top:402px;width:105px;height:24px;border-right:1px solid #808080;border-bottom:1px solid #808080"></div>
<div class="t" style="left:110px;width:107px;top:408px;text-align:center">Дефрагментация</div>
<div class="a" style="left:223px;top:401px;width:84px;height:26px;border-top:1px solid #FFFFFF;border-left:1px solid #FFFFFF;border-right:1px solid #404040;border-bottom:1px solid #404040;background:#D4D0C8"></div>
<div class="a" style="left:224px;top:402px;width:82px;height:24px;border-right:1px solid #808080;border-bottom:1px solid #808080"></div>
<div class="t" style="left:224px;width:84px;top:409px;text-align:center;color:#fff">Пауза</div>
<div class="t" style="left:223px;width:84px;top:408px;text-align:center;color:#808080">Пауза</div>
<div class="a" style="left:313px;top:401px;width:84px;height:26px;border-top:1px solid #FFFFFF;border-left:1px solid #FFFFFF;border-right:1px solid #404040;border-bottom:1px solid #404040;background:#D4D0C8"></div>
<div class="a" style="left:314px;top:402px;width:82px;height:24px;border-right:1px solid #808080;border-bottom:1px solid #808080"></div>
<div class="t" style="left:314px;width:84px;top:409px;text-align:center;color:#fff">Остановка</div>
<div class="t" style="left:313px;width:84px;top:408px;text-align:center;color:#808080">Остановка</div>
<div class="a" style="left:403px;top:401px;width:96px;height:26px;border-top:1px solid #FFFFFF;border-left:1px solid #FFFFFF;border-right:1px solid #404040;border-bottom:1px solid #404040;background:#D4D0C8"></div>
<div class="a" style="left:404px;top:402px;width:94px;height:24px;border-right:1px solid #808080;border-bottom:1px solid #808080"></div>
<div class="t" style="left:403px;width:96px;top:408px;text-align:center">Вывести отчет</div>
<div class="a" style="left:20px;top:441px;width:571px;height:1px;background:#808080"></div>
<div class="a" style="left:20px;top:442px;width:571px;height:1px;background:#FFFFFF"></div>
<div class="a" style="left:20px;top:457px;width:12px;height:12px;border:1px solid #000;background:#FF0000"></div>
<div class="t" style="left:36px;top:458px;letter-spacing:-0.05px">Фрагментированные файлы</div>
<div class="a" style="left:192px;top:457px;width:12px;height:12px;border:1px solid #000;background:#0000FF"></div>
<div class="t" style="left:208px;top:458px;letter-spacing:-0.1px">Нефрагментированные файлы</div>
<div class="a" style="left:377px;top:457px;width:12px;height:12px;border:1px solid #000;background:#00FF00"></div>
<div class="t" style="left:393px;top:458px;letter-spacing:-0.3px">Неперемещаемые файлы</div>
<div class="a" style="left:20px;top:473px;width:12px;height:12px;border:1px solid #000;background:#FFFFFF"></div>
<div class="t" style="left:36px;top:474px;letter-spacing:0px">Свободно</div>
<div class="a" style="left:4px;top:505px;width:382px;height:18px;border-top:1px solid #808080;border-left:1px solid #808080;border-right:1px solid #FFFFFF;border-bottom:1px solid #FFFFFF;"></div>
<div class="a" style="left:388px;top:505px;width:131px;height:18px;border-top:1px solid #808080;border-left:1px solid #808080;border-right:1px solid #FFFFFF;border-bottom:1px solid #FFFFFF;"></div>
<div class="a" style="left:521px;top:505px;width:83px;height:18px;border-top:1px solid #808080;border-left:1px solid #808080;border-right:1px solid #FFFFFF;border-bottom:1px solid #FFFFFF;"></div>
</body></html>
